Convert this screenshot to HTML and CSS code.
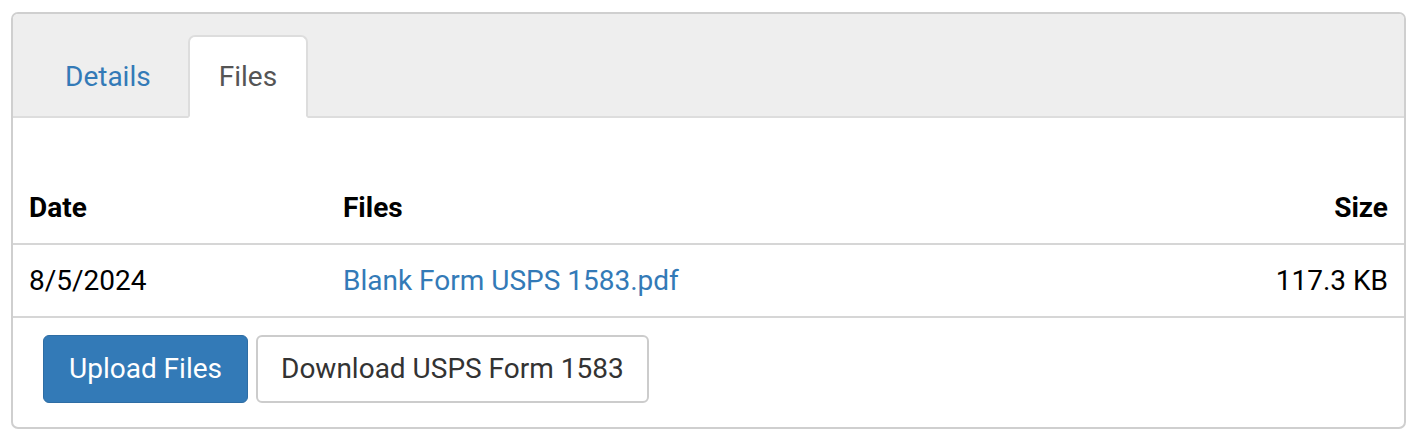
FILE: index.html
```html
<!DOCTYPE html>
<html>
<head>
<meta charset="utf-8">
<link rel="stylesheet" href="styles.css">
</head>
<body>
<div class="card">
  <div class="card-head">
    <ul class="tabs">
      <li class="tab"><a href="#">Details</a></li>
      <li class="tab active"><a href="#">Files</a></li>
    </ul>
  </div>
  <div class="card-body">
    <table class="files">
      <colgroup>
        <col class="c-date">
        <col class="c-file">
        <col class="c-size">
      </colgroup>
      <thead>
        <tr><th>Date</th><th>Files</th><th class="right">Size</th></tr>
      </thead>
      <tbody>
        <tr><td>8/5/2024</td><td><a href="#">Blank Form USPS 1583.pdf</a></td><td class="right">117.3 KB</td></tr>
      </tbody>
    </table>
    <div class="actions">
      <button class="btn primary">Upload Files</button>
      <button class="btn default">Download USPS Form 1583</button>
    </div>
  </div>
</div>
</body>
</html>
```
FILE: styles.css
```css
* { box-sizing: border-box; }
html, body { margin: 0; padding: 0; background: #fff; }
body {
  font-family: Roboto, "Liberation Sans", Arial, sans-serif;
  font-size: 28px;
  color: #000;
  padding: 12px 11px 0 11px;
}
a { color: #337ab7; text-decoration: none; }
.card {
  width: 1395px;
  height: 417px;
  border: 2px solid #cfcfcf;
  border-radius: 7px;
  overflow: hidden;
  display: flex;
  flex-direction: column;
}
.card-head {
  background: #eeeeee;
  border-bottom: 2px solid #dddddd;
  padding: 21px 0 0 21px;
}
.tabs {
  list-style: none;
  margin: 0 0 -2px 0;
  padding: 0;
  display: flex;
  gap: 6px;
}
.tab a {
  display: block;
  padding: 20px 29px;
  line-height: 39px;
  border: 2px solid transparent;
  border-radius: 7px 7px 0 0;
}
.tab.active a {
  background: #fff;
  border-color: #dddddd;
  border-bottom-color: #fff;
  color: #555;
}
.card-body { padding-top: 54px; }
.files {
  width: 100%;
  border-collapse: collapse;
  table-layout: fixed;
}
.c-date { width: 314px; }
.c-size { width: 260px; }
.files th, .files td {
  padding: 16px 16px;
  line-height: 39px;
  text-align: left;
  border-bottom: 2px solid #d6d6d6;
}
.files th { font-weight: 700; }
.files .right { text-align: right; }
.actions {
  padding: 17px 0 0 30px;
  display: flex;
  gap: 8px;
}
.btn {
  font-family: Roboto, "Liberation Sans", Arial, sans-serif;
  font-size: 28px;
  line-height: 66px;
  padding: 0 25px;
  border-radius: 6px;
  border: 1px solid;
  cursor: pointer;
}
.btn.primary {
  background: #337ab7;
  border-color: #2e6da4;
  color: #fff;
}
.btn.default {
  background: #fff;
  border: 2px solid #cccccc;
  line-height: 64px;
  padding: 0 23px;
  color: #333;
}
```
